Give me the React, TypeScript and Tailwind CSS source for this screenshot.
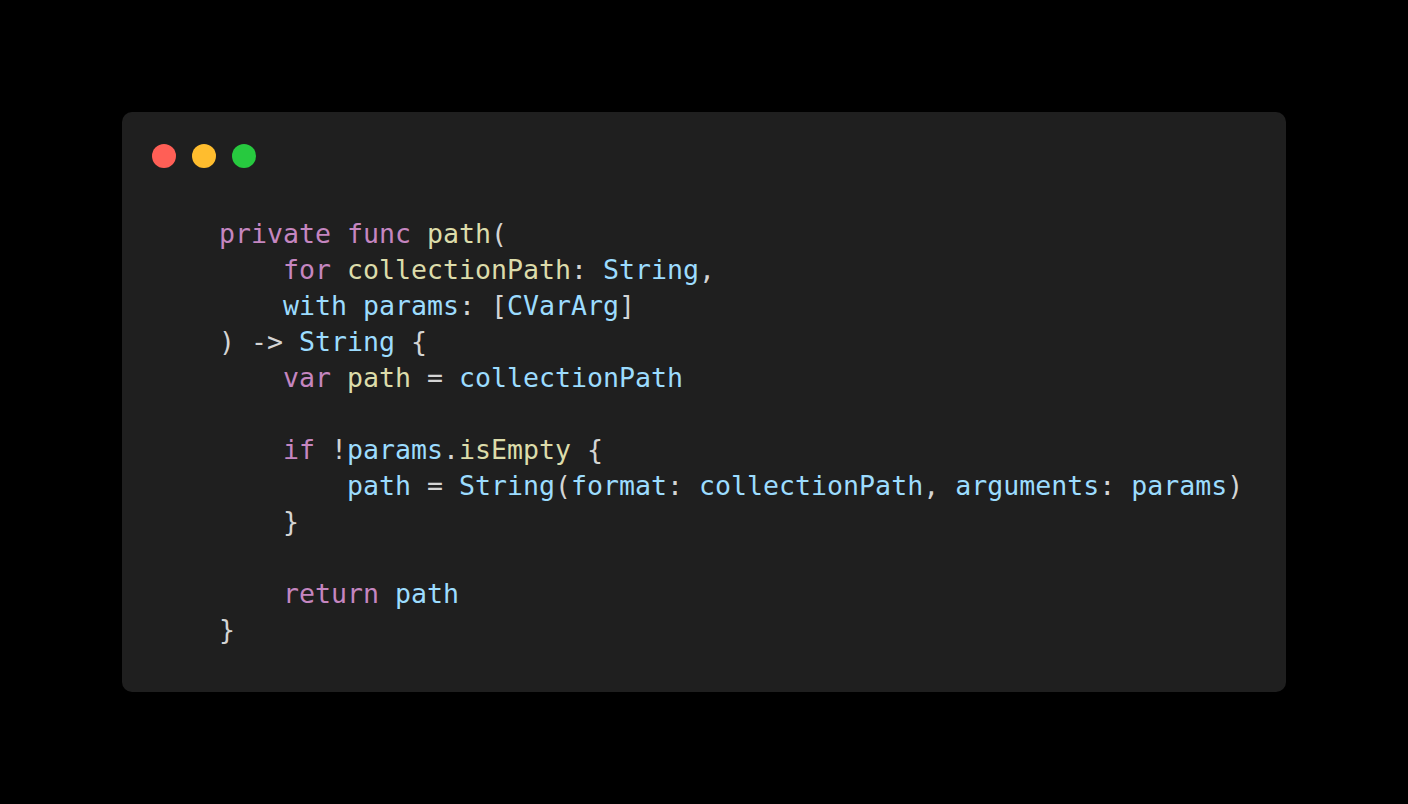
type Tok = [string, "k" | "f" | "v" | "p"];

const colors: Record<Tok[1], string> = {
  k: "text-[#c586c0]",
  f: "text-[#dcdcaa]",
  v: "text-[#9cdcfe]",
  p: "text-[#d4d4d4]",
};

const lines: Tok[][] = [
  [["private func ", "k"], ["path", "f"], ["(", "p"]],
  [["    ", "p"], ["for ", "k"], ["collectionPath", "f"], [": ", "p"], ["String", "v"], [",", "p"]],
  [["    ", "p"], ["with params", "v"], [": [", "p"], ["CVarArg", "v"], ["]", "p"]],
  [[") -> ", "p"], ["String", "v"], [" {", "p"]],
  [["    ", "p"], ["var ", "k"], ["path", "f"], [" = ", "p"], ["collectionPath", "v"]],
  [],
  [["    ", "p"], ["if ", "k"], ["!", "p"], ["params", "v"], [".", "p"], ["isEmpty", "f"], [" {", "p"]],
  [
    ["        ", "p"],
    ["path", "v"],
    [" = ", "p"],
    ["String", "v"],
    ["(", "p"],
    ["format", "v"],
    [": ", "p"],
    ["collectionPath", "v"],
    [", ", "p"],
    ["arguments", "v"],
    [": ", "p"],
    ["params", "v"],
    [")", "p"],
  ],
  [["    }", "p"]],
  [],
  [["    ", "p"], ["return ", "k"], ["path", "v"]],
  [["}", "p"]],
];

export default function App() {
  return (
    <div className="flex min-h-screen items-center justify-center bg-black">
      <div className="h-[580px] w-[1164px] rounded-[10px] bg-[#1f1f1f] px-[30px] pt-[32px]">
        <div className="flex gap-4">
          <span className="h-6 w-6 rounded-full bg-[#ff5f56]" />
          <span className="h-6 w-6 rounded-full bg-[#ffbd2e]" />
          <span className="h-6 w-6 rounded-full bg-[#27c93f]" />
        </div>
        <pre className="mt-[48px] pl-[67px] font-['DejaVu_Sans_Mono',monospace] text-[26.58px] leading-[36px] text-[#d4d4d4]">
          {lines.map((line, i) => (
            <div key={i} className="h-9 whitespace-pre">
              {line.map(([text, kind], j) => (
                <span key={j} className={colors[kind]}>
                  {text}
                </span>
              ))}
            </div>
          ))}
        </pre>
      </div>
    </div>
  );
}
